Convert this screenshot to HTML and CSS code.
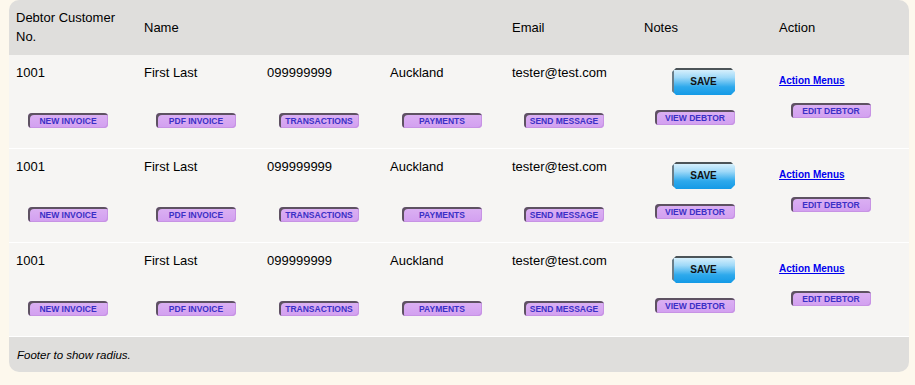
FILE: index.html
```html
<!DOCTYPE html>
<html>

<head>
    <meta name="viewport" content="width=device-width, initial-scale=1">
    <link rel="stylesheet" href="styles.css">
    <title>Debtors</title>
</head>

<body>
    <div class="debtor-table">
        <table>
            <thead>
                <tr>
                    <th class="col-no">Debtor Customer No.</th>
                    <th class="col-name">Name</th>
                    <th class="col-phone"></th>
                    <th class="col-city"></th>
                    <th class="col-email">Email</th>
                    <th class="col-notes">Notes</th>
                    <th class="col-action">Action</th>
                </tr>
            </thead>
            <tbody>
                <tr>
                    <td><div class="val">1001</div><span class="btn">New Invoice</span></td>
                    <td><div class="val">First Last</div><span class="btn">PDF Invoice</span></td>
                    <td><div class="val">099999999</div><span class="btn">Transactions</span></td>
                    <td><div class="val">Auckland</div><span class="btn">Payments</span></td>
                    <td><div class="val">tester@test.com</div><span class="btn">Send Message</span></td>
                    <td><span class="save">Save</span><span class="btn view">View Debtor</span></td>
                    <td><div class="menu"><a href="#">Action Menus</a></div><span class="btn">Edit Debtor</span></td>
                </tr>
                <tr>
                    <td><div class="val">1001</div><span class="btn">New Invoice</span></td>
                    <td><div class="val">First Last</div><span class="btn">PDF Invoice</span></td>
                    <td><div class="val">099999999</div><span class="btn">Transactions</span></td>
                    <td><div class="val">Auckland</div><span class="btn">Payments</span></td>
                    <td><div class="val">tester@test.com</div><span class="btn">Send Message</span></td>
                    <td><span class="save">Save</span><span class="btn view">View Debtor</span></td>
                    <td><div class="menu"><a href="#">Action Menus</a></div><span class="btn">Edit Debtor</span></td>
                </tr>
                <tr>
                    <td><div class="val">1001</div><span class="btn">New Invoice</span></td>
                    <td><div class="val">First Last</div><span class="btn">PDF Invoice</span></td>
                    <td><div class="val">099999999</div><span class="btn">Transactions</span></td>
                    <td><div class="val">Auckland</div><span class="btn">Payments</span></td>
                    <td><div class="val">tester@test.com</div><span class="btn">Send Message</span></td>
                    <td><span class="save">Save</span><span class="btn view">View Debtor</span></td>
                    <td><div class="menu"><a href="#">Action Menus</a></div><span class="btn">Edit Debtor</span></td>
                </tr>
            </tbody>
            <tfoot>
                <tr>
                    <td colspan="7">Footer to show radius.</td>
                </tr>
            </tfoot>
        </table>
    </div>
</body>

</html>
```

FILE: styles.css
```css
body {
    background-color: #fdf8ed;
    margin: 0 0 0 9px;
    font-family: "Liberation Sans", Arial, sans-serif;
    font-size: 13px;
    color: #000;
}

.debtor-table {
    width: 900px;
    border-radius: 10px;
    overflow: hidden;
}

table {
    width: 100%;
    border-collapse: collapse;
    table-layout: fixed;
}

th {
    background-color: #dfdedc;
    font-weight: normal;
    text-align: left;
    line-height: 19px;
    padding: 8px 7px 9px;
    vertical-align: middle;
}

/* widths are content widths, padding comes on top */
.col-no { width: 114px; }
.col-name { width: 109px; }
.col-phone { width: 109px; }
.col-city { width: 108px; }
.col-email { width: 118px; }
.col-notes { width: 121px; }

tbody td {
    background-color: #f6f5f3;
    border-bottom: 1px solid #ffffff;
    padding: 8px 7px 20px;
    vertical-align: top;
    height: 65px;
}

.val {
    line-height: 19px;
    height: 19px;
    margin-bottom: 31px;
    white-space: nowrap;
}

.btn {
    display: block;
    box-sizing: border-box;
    width: 80px;
    height: 15px;
    margin-left: 12px;
    border-radius: 4px;
    background: linear-gradient(#dcb2f3, #d29ff0);
    box-shadow: inset 2px 2px 0 #5e5262, inset -1px -1px 0 #c793e4;
    color: #3b30c6;
    font-size: 8.5px;
    font-weight: bold;
    text-transform: uppercase;
    text-align: center;
    line-height: 16px;
    white-space: nowrap;
}

.btn.view {
    margin-left: 11px;
    margin-top: 15px;
}

.save {
    display: block;
    width: 63px;
    height: 27px;
    margin: 5px 0 0 28px;
    clip-path: polygon(4px 0, 59px 0, 63px 4px, 63px 23px, 59px 27px, 4px 27px, 0 23px, 0 4px);
    background: linear-gradient(#e4f5fd 0%, #9fd9f8 35%, #2ea9ec 70%, #149ae6 100%);
    box-shadow: inset 0 2px 0 #4c5458, inset 2px 0 0 #6a7d88;
    color: #111;
    font-size: 10px;
    font-weight: bold;
    text-transform: uppercase;
    text-align: center;
    line-height: 28px;
}

.menu {
    line-height: 19px;
    margin: 7px 0 13px;
    white-space: nowrap;
}

.menu a {
    color: #0000ee;
    font-size: 10px;
    font-weight: bold;
}

tfoot td {
    background-color: #dfdedc;
    font-style: italic;
    font-size: 11.5px;
    padding: 0 8px;
    height: 35px;
    vertical-align: middle;
}
```
